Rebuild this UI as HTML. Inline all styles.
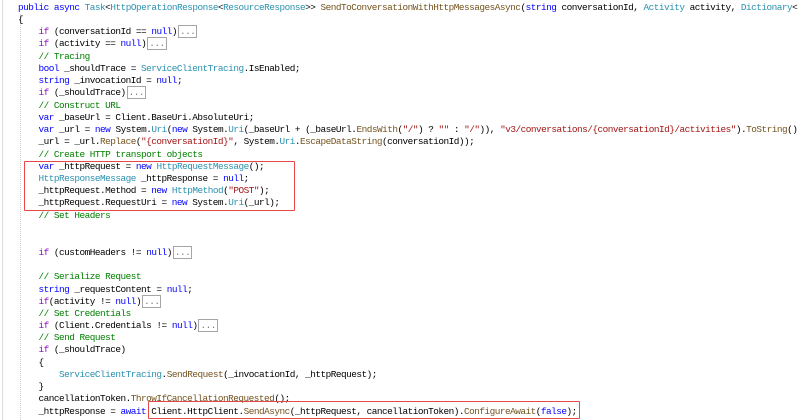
<!DOCTYPE html>
<html><head><meta charset="utf-8"><style>
body{margin:0;width:800px;height:420px;overflow:hidden;background:#fff;position:relative;font-family:"Liberation Mono",monospace;font-size:9.4px;letter-spacing:-0.5px;color:#000}
.l{position:absolute;left:18px;white-space:pre;line-height:12px;height:12px}
.k{color:#0000ff}.t{color:#2b91af}.c{color:#008000}.s{color:#a31515}.m{color:#74531f}.p{color:#8f08c4}
.b{border:1px solid #a5a5a5;color:#777;padding:0 1px;margin-left:1px}
.r{position:absolute;border:1.5px solid #e8474a;border-radius:1px}
.g{position:absolute;left:20px;top:14px;height:406px;border-left:1px dotted #ccc}
.e{position:absolute;left:2px;top:0;height:420px;border-left:1px solid #ddd}
</style></head><body>
<div class="e"></div><div class="g"></div>
<div class="l" style="top:2px"><span class="k">public async</span> <span class="t">Task</span>&lt;<span class="t">HttpOperationResponse</span>&lt;<span class="t">ResourceResponse</span>&gt;&gt; <span class="m">SendToConversationWithHttpMessagesAsync</span>(<span class="k">string</span> conversationId, <span class="t">Activity</span> activity, <span class="t">Dictionary</span>&lt;</div>
<div class="l" style="top:14px">{</div>
<div class="l" style="top:26px">    <span class="p">if</span> (conversationId == <span class="k">null</span>)<span class="b">...</span></div>
<div class="l" style="top:38px">    <span class="p">if</span> (activity == <span class="k">null</span>)<span class="b">...</span></div>
<div class="l" style="top:51px">    <span class="c">// Tracing</span></div>
<div class="l" style="top:63px">    <span class="k">bool</span> _shouldTrace = <span class="t">ServiceClientTracing</span>.IsEnabled;</div>
<div class="l" style="top:75px">    <span class="k">string</span> _invocationId = <span class="k">null</span>;</div>
<div class="l" style="top:87px">    <span class="p">if</span> (_shouldTrace)<span class="b">...</span></div>
<div class="l" style="top:100px">    <span class="c">// Construct URL</span></div>
<div class="l" style="top:112px">    <span class="k">var</span> _baseUrl = Client.BaseUri.AbsoluteUri;</div>
<div class="l" style="top:124px">    <span class="k">var</span> _url = <span class="k">new</span> System.<span class="t">Uri</span>(<span class="k">new</span> System.<span class="t">Uri</span>(_baseUrl + (_baseUrl.<span class="m">EndsWith</span>(<span class="s">"/"</span>) ? <span class="s">""</span> : <span class="s">"/"</span>)), <span class="s">"v3/conversations/{conversationId}/activities"</span>).<span class="m">ToString</span>()</div>
<div class="l" style="top:136px">    _url = _url.<span class="m">Replace</span>(<span class="s">"{conversationId}"</span>, System.<span class="t">Uri</span>.<span class="m">EscapeDataString</span>(conversationId));</div>
<div class="l" style="top:149px">    <span class="c">// Create HTTP transport objects</span></div>
<div class="l" style="top:161px">    <span class="k">var</span> _httpRequest = <span class="k">new</span> <span class="t">HttpRequestMessage</span>();</div>
<div class="l" style="top:173px">    <span class="t">HttpResponseMessage</span> _httpResponse = <span class="k">null</span>;</div>
<div class="l" style="top:185px">    _httpRequest.Method = <span class="k">new</span> <span class="t">HttpMethod</span>(<span class="s">"POST"</span>);</div>
<div class="l" style="top:197px">    _httpRequest.RequestUri = <span class="k">new</span> System.<span class="t">Uri</span>(_url);</div>
<div class="l" style="top:210px">    <span class="c">// Set Headers</span></div>
<div class="l" style="top:247px">    <span class="p">if</span> (customHeaders != <span class="k">null</span>)<span class="b">...</span></div>
<div class="l" style="top:271px">    <span class="c">// Serialize Request</span></div>
<div class="l" style="top:284px">    <span class="k">string</span> _requestContent = <span class="k">null</span>;</div>
<div class="l" style="top:296px">    <span class="p">if</span>(activity != <span class="k">null</span>)<span class="b">...</span></div>
<div class="l" style="top:308px">    <span class="c">// Set Credentials</span></div>
<div class="l" style="top:320px">    <span class="p">if</span> (Client.Credentials != <span class="k">null</span>)<span class="b">...</span></div>
<div class="l" style="top:332px">    <span class="c">// Send Request</span></div>
<div class="l" style="top:344px">    <span class="p">if</span> (_shouldTrace)</div>
<div class="l" style="top:357px">    {</div>
<div class="l" style="top:369px">        <span class="t">ServiceClientTracing</span>.<span class="m">SendRequest</span>(_invocationId, _httpRequest);</div>
<div class="l" style="top:381px">    }</div>
<div class="l" style="top:393px">    cancellationToken.<span class="m">ThrowIfCancellationRequested</span>();</div>
<div class="l" style="top:406px">    _httpResponse = <span class="k">await</span> Client.HttpClient.<span class="m">SendAsync</span>(_httpRequest, cancellationToken).<span class="m">ConfigureAwait</span>(<span class="k">false</span>);</div>
<div class="r" style="left:24px;top:161px;width:269px;height:48px"></div>
<div class="r" style="left:148px;top:401px;width:430px;height:16px"></div>
</body></html>
